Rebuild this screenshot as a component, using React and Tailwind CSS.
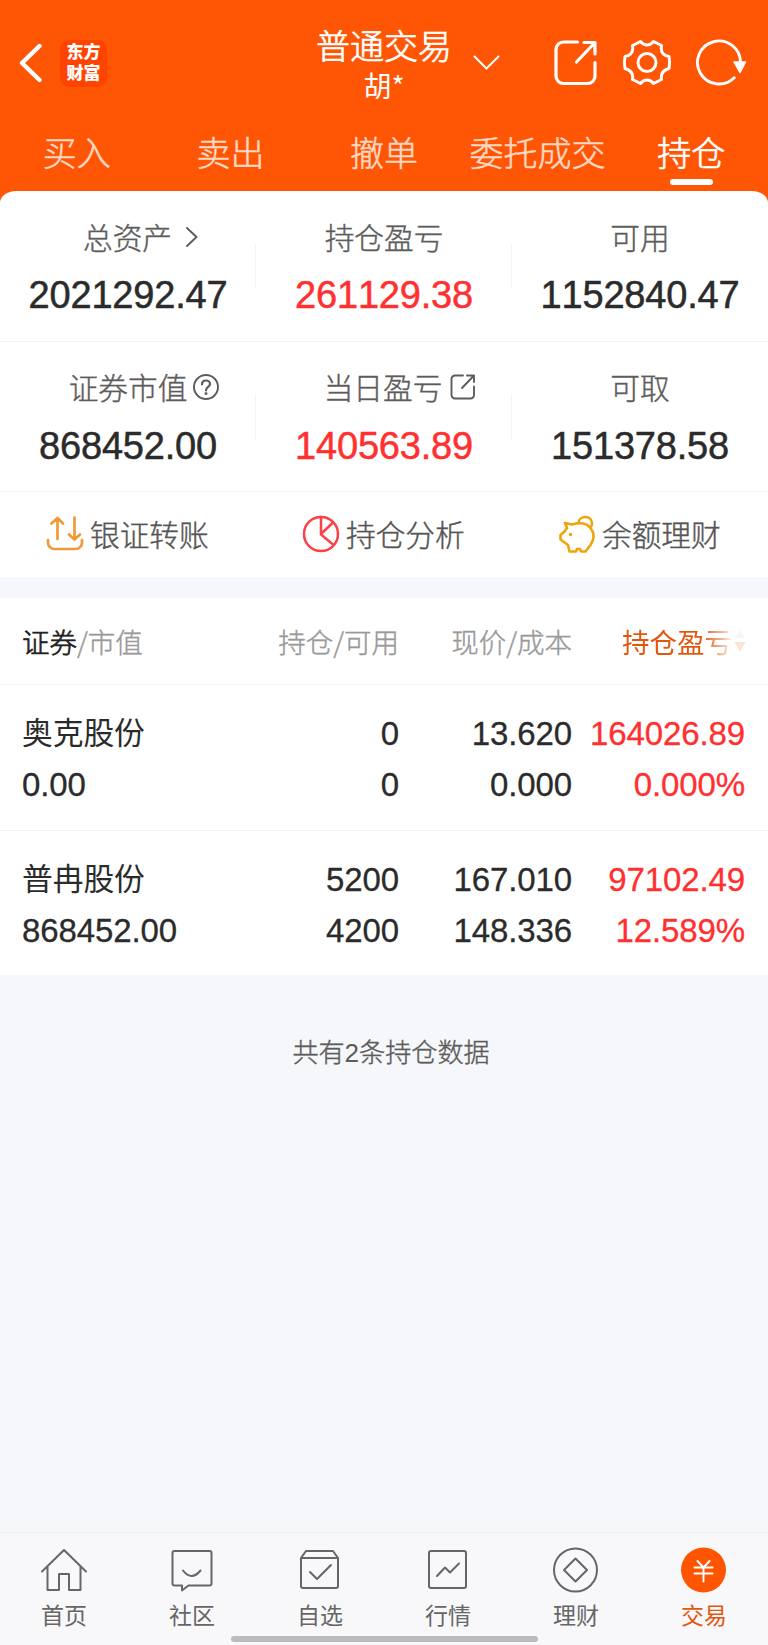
import React from "react";

const CJK = "font-['Noto_Sans_CJK_SC',sans-serif]";
const NUM = "font-['Liberation_Sans',sans-serif] [font-kerning:none]";

function Svg({ w, h, sw = 2, className = "", children }) {
  return (
    <svg
      width={w}
      height={h}
      viewBox={`0 0 ${w} ${h}`}
      fill="none"
      stroke="currentColor"
      strokeWidth={sw}
      strokeLinecap="round"
      strokeLinejoin="round"
      className={`block shrink-0 ${className}`}
    >
      {children}
    </svg>
  );
}

function Header() {
  const tabs = ["买入", "卖出", "撤单", "委托成交", "持仓"];
  return (
    <header className="h-[191px] text-white">
      <div className="flex h-[124px]">
        <div className="flex w-[303px] items-center pt-0.5 pl-[18px]">
          <Svg w={24} h={40} sw={4.4}>
            <path d="M21.500 3 4 20 21.500 37" />
          </Svg>
          <div className="ml-[18px] flex h-[47px] w-[47px] flex-col items-center justify-center rounded-[9px] bg-[#ff4301] pb-[5px] text-[17px] leading-[21px] font-black">
            <span>东方</span>
            <span>财富</span>
          </div>
        </div>
        <div className="flex w-[162px] flex-col items-center pt-6">
          <div className="h-[41px] text-[34px] leading-[41px] font-light whitespace-nowrap [-webkit-text-stroke:0.700px]">普通交易</div>
          <div className="h-[38px] text-[28px] leading-[40px]">胡*</div>
        </div>
        <div className="flex w-[303px] items-center pt-0.5 pl-2">
          <Svg w={27} h={16} sw={2}>
            <path d="M1.500 1.500 13.500 13.500 25.500 1.500" />
          </Svg>
          <Svg w={43} h={46} sw={3.2} className="ml-[54px]">
            <path d="M23.500 2H9.500a7.500 7.500 0 0 0-7.500 7.500v26.500a7.500 7.500 0 0 0 7.500 7.500h24a7.500 7.500 0 0 0 7.500-7.500V22.500M30 2.500H41V14M40.500 3 22.500 22" />
          </Svg>
          <Svg w={48} h={48} sw={2.9} className="ml-[26px]">
            <path d="M17.500 2.500c2 2.500 4 3.500 6.500 3.500s4.500-1 6.500-3.500l8 4c-1 6 1.500 10 7.500 11q1 6 0 12c-5.500 1.500-8.500 5-7.500 11l-8 4c-2-2.600-4-3.500-6.500-3.500s-4.500 .9-6.500 3.500l-8-4c1-6-2-9.500-7.500-11q-1-6 0-12c6-1 8.500-5 7.500-11z" />
            <circle cx="24" cy="23.500" r="9" />
          </Svg>
          <Svg w={52} h={48} sw={2.9} className="ml-6">
            <path d="M45.500 23.500A21.500 21.500 0 1 0 39.200 38.700" />
            <path d="M39 23H50.500L45 33.500z" fill="currentColor" strokeWidth="1.500" />
          </Svg>
        </div>
      </div>
      <nav className="grid grid-cols-5">
        {tabs.map((t) => {
          const on = t === "持仓";
          return (
            <div key={t} className="flex flex-col items-center">
              <div className={`h-[55px] text-[34px] leading-[55px] font-light whitespace-nowrap ${on ? "text-white [-webkit-text-stroke:0.700px]" : "text-[#ffd9c4] [-webkit-text-stroke:0.500px]"}`}>{t}</div>
              {on && <div className="h-1.5 w-[43px] rounded-full bg-white" />}
            </div>
          );
        })}
      </nav>
    </header>
  );
}

const ChevronRight = () => (
  <Svg w={14} h={22} sw={1.9} className="ml-[13px]">
    <path d="M2 2 11.500 11 2 20" />
  </Svg>
);
const Help = () => (
  <Svg w={26} h={26} sw={1.9} className="ml-1.5">
    <circle cx="13" cy="13" r="12" />
    <path d="M9 10.500c0-5.500 8-5 8-.5 0 3-4 3-4 6.500" strokeWidth="2.200" />
    <circle cx="13" cy="19.500" r="0.600" />
  </Svg>
);
const OpenOut = () => (
  <Svg w={26} h={26} sw={1.9} className="ml-2">
    <path d="M13 1.500H5a3.500 3.500 0 0 0-3.500 3.500v16A3.500 3.500 0 0 0 5 24.500h15.500A3.500 3.500 0 0 0 24 21v-8.500M17 1.500h7V8M24 1.500 12 14" />
  </Svg>
);

function Metric({ label, value, red, icon, divider, shift = "" }) {
  return (
    <div className="relative flex flex-col items-center">
      <div className={`mt-[26px] flex h-[40px] items-center text-[29.700px] leading-[40px] font-light text-[#5c5c5c] whitespace-nowrap [-webkit-text-stroke:0.400px] ${shift}`}>
        {label}
        {icon}
      </div>
      <div className={`mt-[18px] h-[40px] text-[38px] leading-[40px] tracking-[-0.200px] [-webkit-text-stroke:0.500px] ${NUM} ${red ? "text-[#ff3030]" : "text-[#2b2b2b]"}`}>{value}</div>
      {divider && <div className="absolute top-[52px] right-0 h-[46px] w-px bg-[#f4f4f4]" />}
    </div>
  );
}

function Summary() {
  return (
    <section className="rounded-t-[16px_12px] bg-white">
      <div className="grid h-[151px] grid-cols-3 border-b border-[#f4f4f5]">
        <Metric label="总资产" value="2021292.47" icon={<ChevronRight />} divider shift="translate-x-[13px]" />
        <Metric label="持仓盈亏" value="261129.38" red divider />
        <Metric label="可用" value="1152840.47" />
      </div>
      <div className="grid h-[150px] grid-cols-3 border-b border-[#f4f4f5]">
        <Metric label="证券市值" value="868452.00" icon={<Help />} divider shift="-translate-y-px translate-x-[16px]" />
        <Metric label="当日盈亏" value="140563.89" red icon={<OpenOut />} divider shift="-translate-y-px translate-x-[16px]" />
        <Metric label="可取" value="151378.58" shift="-translate-y-px" />
      </div>
      <div className="grid h-[85px] grid-cols-3 text-[29.700px] font-light text-[#555] [-webkit-text-stroke:0.400px]">
        <div className="flex items-center pl-[46px]">
          <Svg w={38} h={36} sw={2.7} className="-mt-0.5 text-[#f09a37]">
            <path d="M2 24v2.500a6.500 6.500 0 0 0 6.500 6.500h21a6.500 6.500 0 0 0 6.500-6.500V24M11.500 23V2M5.500 7.500l6-5.500 5.500 5.500M28.500 1.500V23M23 18.500l5.500 5 5.500-5" />
          </Svg>
          <span className="ml-1.5">银证转账</span>
        </div>
        <div className="flex items-center pl-[46px]">
          <Svg w={38} h={38} sw={2.5} className="-mt-0.5 text-[#fa4248]">
            <circle cx="19" cy="19" r="17" />
            <path d="M19 2V19.500L31 29.500M19 19 30.500 8" />
          </Svg>
          <span className="ml-1.5">持仓分析</span>
        </div>
        <div className="flex items-center pl-[46px]">
          <Svg w={38} h={38} sw={2.6} className="-mt-0.5 text-[#efa40c]">
            <path d="M7 8 14 9.500C21 7.500 28.500 8 32.500 13c4.500 5.500 4 11 0 17l-5 6.500h-4.500l-1-2.500h-3l-1 2.500H11.500l-1.500-6.500L2.500 24.500v-4.500l3.500-3 3-4z" />
            <path d="M20.500 7.500C21.500 0 34 0 34 8.500c0 2-.5 3-1.500 4" />
            <circle cx="12.500" cy="19.500" r="1" strokeWidth="1.600" />
          </Svg>
          <span className="ml-1.5">余额理财</span>
        </div>
      </div>
    </section>
  );
}

const COLS = "grid grid-cols-[217px_160px_173px_173px] pl-[22px]";

const positions = [
  { name: "奥克股份", value: "0.00", qty: "0", avail: "0", price: "13.620", cost: "0.000", pnl: "164026.89", pct: "0.000%" },
  { name: "普冉股份", value: "868452.00", qty: "5200", avail: "4200", price: "167.010", cost: "148.336", pnl: "97102.49", pct: "12.589%" },
];

function Cell({ top, bottom, className = "" }) {
  return (
    <div className={`flex flex-col text-[33px] tracking-[-0.100px] [-webkit-text-stroke:0.300px] ${NUM} ${className}`}>
      <div className="h-[51px] leading-[51px]">{top}</div>
      <div className="h-[51px] leading-[52px]">{bottom}</div>
    </div>
  );
}

function Holdings() {
  return (
    <section className="mt-[21px] bg-white">
      <div className={`${COLS} h-[87px] border-b border-[#f4f4f5] text-[27.500px] leading-[86px] font-light text-[#999] whitespace-nowrap [-webkit-text-stroke:0.400px]`}>
        <div><span className="text-[#222] [-webkit-text-stroke:0.700px]">证券</span>/市值</div>
        <div className="text-right">持仓/可用</div>
        <div className="text-right">现价/成本</div>
        <div className="flex items-center pl-[50px] font-normal [-webkit-text-stroke:0]">
          <span className="bg-[linear-gradient(to_right,#e2560d_72%,#fbe0d2_98%)] bg-clip-text text-transparent">持仓盈亏</span>
          <svg width="12" height="24" viewBox="0 0 12 24" className="ml-0.5 shrink-0">
            <path d="M6 1 11 9H1z" fill="#f5f6f8" />
            <path d="M0.500 13h11L6 23z" fill="#fde3d6" />
          </svg>
        </div>
      </div>
      {positions.map((p, i) => (
        <div key={p.name} className={`${COLS} pt-[23px] text-[#2b2b2b] ${i === 0 ? "h-[146px] border-b border-[#f4f4f5]" : "h-[144px]"}`}>
          <Cell top={<div className={`-mt-[3px] text-[30.800px] ${CJK} [-webkit-text-stroke:0]`}>{p.name}</div>} bottom={p.value} />
          <Cell top={p.qty} bottom={p.avail} className="items-end" />
          <Cell top={p.price} bottom={p.cost} className="items-end" />
          <Cell top={p.pnl} bottom={p.pct} className="items-end text-[#ff3030]" />
        </div>
      ))}
    </section>
  );
}

const tabIcons = {
  首页: <path d="M3 24.500 25 3 47 24.500M8.500 20V43H20V27H30V43H41.500V20" />,
  社区: (
    <>
      <path d="M7.500 4h35q2 0 2 2v30.500q0 2-2 2H21.500L15 43.500V38.500H7.500q-2 0-2-2V6q0-2 2-2z" />
      <path d="M16 23.500q8.500 11 17.500 0" />
    </>
  ),
  自选: <path d="M6 11v28q0 2 2 2h33q2 0 2-2V11L38 4H11zM6 11H43M15 25l7 7 14-14" />,
  行情: (
    <>
      <rect x="6" y="4" width="37" height="37" rx="2" />
      <path d="M14 29l8-8.500 5 5 9-9" />
    </>
  ),
  理财: (
    <>
      <circle cx="24.500" cy="23" r="21.500" />
      <path d="M24.500 11.500 36 23 24.500 34.500 13 23z" />
    </>
  ),
  交易: (
    <>
      <circle cx="24.500" cy="23" r="22.500" fill="#ff5500" stroke="none" />
      <path d="M18.500 14 24.500 20.500 30.500 14M15.500 20.500h18M15.500 26.500h18M24.500 20.500v14" stroke="white" />
    </>
  ),
};

function TabBar() {
  return (
    <footer className="h-[113px] border-t border-[#eeeff1] bg-[#f8f8fb]">
      <nav className="grid h-[103px] grid-cols-6">
        {Object.entries(tabIcons).map(([name, icon]) => (
          <div key={name} className={`flex flex-col items-center pt-[14px] ${name === "交易" ? "text-[#e2560d]" : "text-[#666]"}`}>
            <Svg w={49} h={46} sw={2} className="-ml-px">{icon}</Svg>
            <div className="mt-[4px] h-[34px] text-[23px] leading-[34px]">{name}</div>
          </div>
        ))}
      </nav>
      <div className="mx-auto h-1.5 w-[307px] rounded-full bg-[#bbbbbd]" />
    </footer>
  );
}

export default function App() {
  return (
    <div className={`flex h-[1645px] w-[768px] flex-col overflow-hidden bg-[#f6f7fa] ${CJK}`}>
      <div className="bg-[linear-gradient(#ff5606_0_202px,transparent_202px)]">
        <Header />
        <Summary />
      </div>
      <Holdings />
      <main className="flex-1 pt-[56px] pl-[14px] text-center text-[26.100px] leading-[40px] font-light text-[#5c5c5c] [-webkit-text-stroke:0.400px]">
        共有<span className={`${NUM} [-webkit-text-stroke:0]`}>2</span>条持仓数据
      </main>
      <TabBar />
    </div>
  );
}
